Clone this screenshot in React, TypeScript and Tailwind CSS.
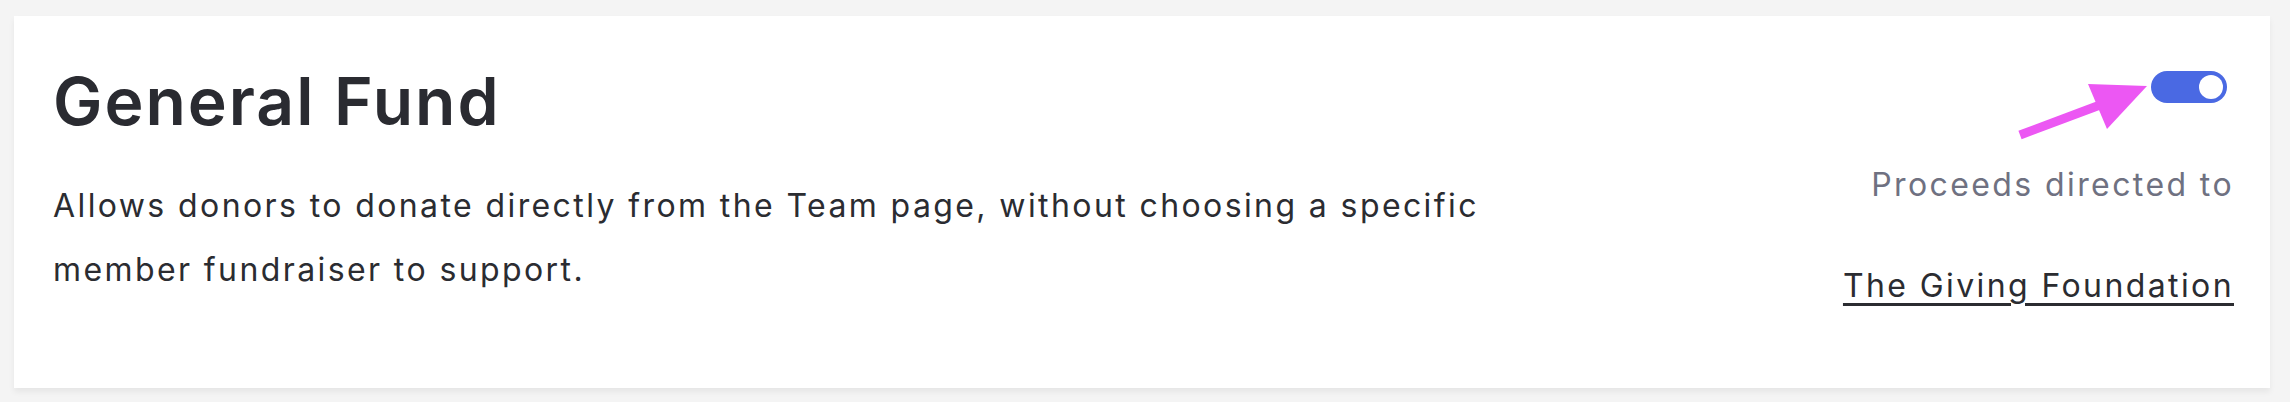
import React from 'react';

const font = { fontFamily: 'Inter, "Noto Sans", sans-serif' };

const Toggle = ({ on }: { on: boolean }) => (
  <button
    className={`flex h-8 w-[76px] items-center rounded-full px-1 ${on ? 'justify-end bg-[#4a69e3]' : 'justify-start bg-gray-300'}`}
  >
    <span className="block h-6 w-6 rounded-full bg-white" />
  </button>
);

const App = () => {
  return (
    <div className="min-h-[402px] w-full bg-[#f4f4f4] pt-4 pl-[14px] pr-[20px]" style={font}>
      <div className="relative flex h-[372px] justify-between bg-white pl-[39px] pr-9 pt-[52px] shadow-[0_4px_6px_rgba(0,0,0,0.06)]">
        {/* left side */}
        <div className="flex flex-col">
          <h2 className="text-[66px] font-semibold leading-none tracking-[0.03em] text-[#2a2b31]">General Fund</h2>
          <p className="mt-[40px] max-w-[1480px] text-[32px] leading-[64px] tracking-[0.075em] text-[#2b2c31]">
            Allows donors to donate directly from the Team page, without choosing a specific member fundraiser to support.
          </p>
        </div>

        {/* right side */}
        <div className="flex flex-col items-end pt-[3px]">
          <div className="mr-[7px]">
            <Toggle on />
          </div>
          <div className="mt-[66px] text-[32px] leading-none tracking-[0.075em] text-[#6f7181]">Proceeds directed to</div>
          <a className="mt-[69px] text-[32px] leading-none tracking-[0.075em] text-[#2b2c31] underline underline-offset-[6px]">
            The Giving Foundation
          </a>
        </div>

        {/* annotation arrow */}
        <svg className="pointer-events-none absolute left-[2000px] top-[56px]" width="160" height="100" viewBox="0 0 160 100">
          <line x1="6" y1="63" x2="86" y2="33" stroke="#ec57f3" strokeWidth="9" />
          <polygon points="133,14 74,12 93,57" fill="#ec57f3" />
        </svg>
      </div>
    </div>
  );
};

export default App;
